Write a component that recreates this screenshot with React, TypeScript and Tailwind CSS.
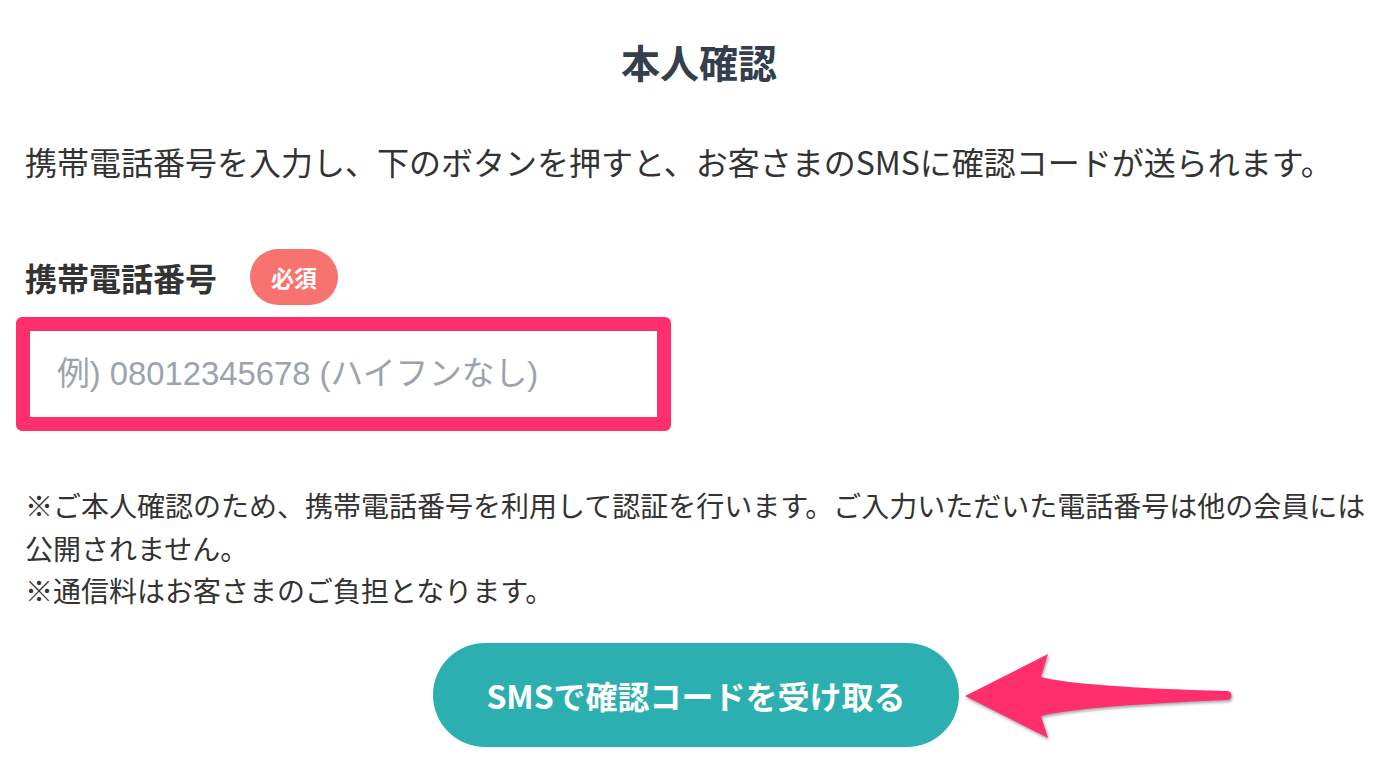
export default function App() {
  const font = { fontFamily: '"Noto Sans CJK JP", "Noto Sans", sans-serif' };

  return (
    <div className="min-h-screen w-full bg-white text-[#333333]" style={font}>
      <div className="flex flex-col px-[25px] pt-[41px]">
        {/* Title */}
        <h1 className="text-center text-[39px] leading-[40px] font-bold text-[#343e4d]">本人確認</h1>

        {/* Intro */}
        <p className="mt-[64px] whitespace-nowrap text-[32px] leading-[32px]">
          携帯電話番号を入力し、下のボタンを押すと、お客さまのSMSに確認コードが送られます。
        </p>

        {/* Label */}
        <div className="mt-[72px] flex h-[56px] items-center">
          <span className="text-[32px] leading-[32px] font-bold">携帯電話番号</span>
          <span className="ml-[33px] flex h-[56px] w-[88px] items-center justify-center rounded-full bg-[#f7736f] text-[23px] font-bold text-white">
            必須
          </span>
        </div>

        {/* Input with highlight */}
        <div className="mt-[12px] -ml-[9px] w-[655px] rounded-[6px] border-[14px] border-[#ff2e6c]">
          <input
            className="block h-[86px] w-full bg-white pl-[27px] text-[32.8px] outline-none placeholder:text-[#9ca3af]"
            style={{ fontFamily: '"Liberation Sans", "Noto Sans CJK JP", sans-serif' }}
            placeholder="例) 08012345678 (ハイフンなし)"
          />
        </div>

        {/* Notes */}
        <p className="mt-[53px] whitespace-nowrap text-[28px] leading-[42.5px]">
          ※ご本人確認のため、携帯電話番号を利用して認証を行います。ご入力いただいた電話番号は他の会員には
          <br />
          公開されません。
          <br />
          ※通信料はお客さまのご負担となります。
        </p>

        {/* Button + arrow */}
        <div className="relative mt-[31px] flex justify-center">
          <button className="ml-[-6px] h-[104px] w-[526px] rounded-full bg-[#2bafb1] text-[32px] font-bold text-white">
            SMSで確認コードを受け取る
          </button>
          <svg
            className="absolute left-[935px] top-[4px]"
            width="280"
            height="100"
            viewBox="0 0 280 100"
            style={{ filter: 'drop-shadow(1px 2px 1.5px rgba(0,0,0,0.35))' }}
          >
            <path
              d="M5 49 L88 7 L81 30 Q120 40 267 44 A4.5 4.5 0 0 1 267 53 Q120 59 81 69 L88 91 Z"
              fill="#ff2e6c"
            />
          </svg>
        </div>
      </div>
    </div>
  );
}
